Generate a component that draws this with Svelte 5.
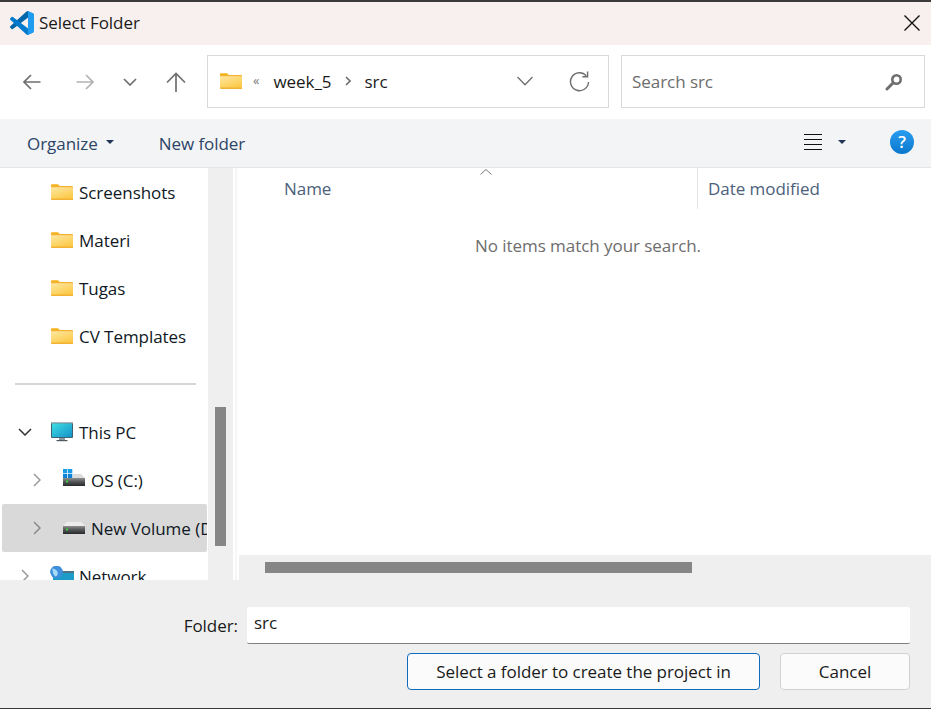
<script>
  const quick = ['Screenshots', 'Materi', 'Tugas', 'CV Templates'];
</script>

{#snippet folder()}
  <svg class="folder" viewBox="0 0 22 18" width="22" height="18">
    <path d="M0 2.2a1 1 0 0 1 1-1h6l2 2h-9z" fill="#f5b21b"/>
    <path d="M0 3h21a1 1 0 0 1 1 1v13H1a1 1 0 0 1-1-1z" fill="#f2b233"/>
    <path d="M0 4.2h21a1 1 0 0 1 1 1V15.6H0z" fill="url(#fg)"/>
  </svg>
{/snippet}

{#snippet drive(win)}
  <svg class="drive" viewBox="0 0 22 20" width="22" height="20">
    {#if win}
      <rect x="0" y="1" width="4.3" height="4.3" fill="#1a9be6"/>
      <rect x="5" y="1" width="4.3" height="4.3" fill="#1a9be6"/>
      <rect x="0" y="6" width="4.3" height="4.3" fill="#0f84d6"/>
      <rect x="5" y="6" width="4.3" height="4.3" fill="#0f84d6"/>
      <path d="M10 6h8l4 4H10z" fill="#dcdcdc"/>
    {:else}
      <path d="M4 6h14l4 4H0z" fill="#ececec"/>
    {/if}
    <rect x="0" y="10" width="22" height="8" fill="url(#hdd)"/>
    <rect x="3" y="12.5" width="2" height="2" fill="#37d437"/>
  </svg>
{/snippet}

<svg class="defs" width="0" height="0" aria-hidden="true">
  <defs>
    <linearGradient id="fg" x1="0" y1="0" x2="0.6" y2="1">
      <stop offset="0" stop-color="#ffe7a3"/>
      <stop offset="1" stop-color="#fbcb4c"/>
    </linearGradient>
    <linearGradient id="mon" x1="0" y1="0" x2="1" y2="1">
      <stop offset="0" stop-color="#3fdde2"/>
      <stop offset="1" stop-color="#1492c9"/>
    </linearGradient>
    <linearGradient id="hdd" x1="0" y1="0" x2="0" y2="1">
      <stop offset="0" stop-color="#8f8f8f"/>
      <stop offset="0.45" stop-color="#55585a"/>
      <stop offset="1" stop-color="#26282a"/>
    </linearGradient>
    <linearGradient id="help" x1="0" y1="0" x2="0" y2="1">
      <stop offset="0" stop-color="#2a9df0"/>
      <stop offset="1" stop-color="#0a78cc"/>
    </linearGradient>
  </defs>
</svg>

<div class="dialog">
  <header class="titlebar">
    <svg class="logo" viewBox="0 0 100 100" width="24" height="24">
      <path d="M96.46 10.8 75.86.87a6.23 6.23 0 0 0-7.1 1.2L1.33 63.6a4.17 4.17 0 0 0 0 6.16l5.5 5a4.17 4.17 0 0 0 5.32.24L93.42 13.3A4.14 4.14 0 0 1 100 16.6v-.24a6.25 6.25 0 0 0-3.54-5.55z" fill="#0065a9"/>
      <path d="M96.46 89.2 75.86 99.13a6.23 6.23 0 0 1-7.1-1.2L1.33 36.4a4.17 4.17 0 0 1 0-6.16l5.5-5a4.17 4.17 0 0 1 5.32-.24l81.27 61.7A4.14 4.14 0 0 0 100 83.4v.24a6.25 6.25 0 0 1-3.54 5.55z" fill="#007acc"/>
      <path d="M75.86 99.13a6.23 6.23 0 0 1-7.1-1.2c2.3 2.3 6.24.67 6.24-2.58V4.65c0-3.25-3.94-4.88-6.24-2.58a6.23 6.23 0 0 1 7.1-1.2l20.6 9.9A6.25 6.25 0 0 1 100 16.4v67.2a6.25 6.25 0 0 1-3.54 5.63z" fill="#1f9cf0"/>
    </svg>
    <span class="title">Select Folder</span>
    <svg class="close" viewBox="0 0 16 16" width="16" height="16">
      <path d="M.5.5l15 15M15.5.5l-15 15" stroke="#111" stroke-width="1.4" fill="none"/>
    </svg>
  </header>

  <div class="toolbar">
    <div class="nav">
      <svg viewBox="0 0 18 16" width="18" height="16"><path d="M17.5 8H1M8 1 1 8l7 7" stroke="#6f6f6f" stroke-width="1.7" fill="none"/></svg>
      <svg viewBox="0 0 18 16" width="18" height="16"><path d="M.5 8H17M10 1l7 7-7 7" stroke="#b2b2b2" stroke-width="1.7" fill="none"/></svg>
      <svg viewBox="0 0 14 8" width="14" height="8"><path d="M1 1l6 6 6-6" stroke="#6f6f6f" stroke-width="1.7" fill="none"/></svg>
      <svg viewBox="0 0 20 20" width="20" height="20"><path d="M10 20V1.5M1 10.5l9-9 9 9" stroke="#6f6f6f" stroke-width="1.7" fill="none"/></svg>
    </div>
    <div class="address">
      {@render folder()}
      <span class="rewind">«</span>
      <span class="crumb">week_5</span>
      <svg class="sep" viewBox="0 0 6 10" width="6" height="10"><path d="M1 1l4 4-4 4" stroke="#6f6f6f" stroke-width="1.6" fill="none"/></svg>
      <span class="crumb">src</span>
      <svg class="addr-drop" viewBox="0 0 16 10" width="16" height="10"><path d="M.5 1 8 8.800 15.500 1" stroke="#6f6f6f" stroke-width="1.3" fill="none"/></svg>
      <svg class="refresh" viewBox="0 0 21 21" width="21" height="21">
        <path d="M17.3 4.8A9 9 0 1 0 19.5 11" stroke="#6f6f6f" stroke-width="1.4" fill="none"/>
        <path d="M18.6.6v5.2h-5.2" stroke="#6f6f6f" stroke-width="1.4" fill="none"/>
      </svg>
    </div>
    <div class="search">
      <span>Search src</span>
      <svg class="mag" viewBox="0 0 18 18" width="18" height="18">
        <circle cx="11.5" cy="6.5" r="4.2" stroke="#6f6f6f" stroke-width="2.6" fill="none"/>
        <path d="M8 10 2 16" stroke="#6f6f6f" stroke-width="3" stroke-linecap="round"/>
      </svg>
    </div>
  </div>

  <div class="commands">
    <span class="cmd">Organize</span>
    <span class="caret org"></span>
    <span class="cmd newf">New folder</span>
    <svg class="viewicon" viewBox="0 0 18 16" width="18" height="16">
      <path d="M0 .5h18M0 5.500h18M0 10.500h18M0 15.500h18" stroke="#111" stroke-width="1" fill="none"/>
    </svg>
    <span class="caret view"></span>
    <svg class="helpicon" viewBox="0 0 24 24" width="24" height="24">
      <circle cx="12" cy="12" r="12" fill="url(#help)"/>
      <text x="12" y="18" text-anchor="middle" class="q">?</text>
    </svg>
  </div>

  <div class="body">
    <aside class="side">
      <div class="tree">
        {#each quick as q}
          <div class="row lvl1">{@render folder()}<span>{q}</span></div>
        {/each}
        <div class="divider"></div>
        <div class="row lvl0">
          <svg class="chev" viewBox="0 0 14 8" width="14" height="8"><path d="M1 1l6 6 6-6" stroke="#333" stroke-width="1.500" fill="none"/></svg>
          <svg class="pc" viewBox="0 0 22 20" width="22" height="20">
            <rect x="0" y="0" width="22" height="16" rx="1" fill="#3f6173"/>
            <rect x="0" y="0" width="22" height="1.500" fill="#a9b4ba"/>
            <rect x="1" y="1.500" width="20" height="13.500" fill="url(#mon)"/>
            <rect x="8" y="16" width="6" height="2" fill="#8b989f"/>
            <rect x="5.500" y="18" width="11" height="1.200" fill="#4f5a61"/>
          </svg>
          <span>This PC</span>
        </div>
        <div class="row lvl2">
          <svg class="chev" viewBox="0 0 8 14" width="8" height="14"><path d="M1 1l6 6-6 6" stroke="#9a9a9a" stroke-width="1.500" fill="none"/></svg>
          {@render drive(true)}
          <span>OS (C:)</span>
        </div>
        <div class="row lvl2 selected">
          <svg class="chev" viewBox="0 0 8 14" width="8" height="14"><path d="M1 1l6 6-6 6" stroke="#8a8a8a" stroke-width="1.500" fill="none"/></svg>
          {@render drive(false)}
          <span>New Volume (D:)</span>
        </div>
        <div class="row lvl0 net">
          <svg class="chev" viewBox="0 0 8 14" width="8" height="14"><path d="M1 1l6 6-6 6" stroke="#9a9a9a" stroke-width="1.500" fill="none"/></svg>
          <svg class="pc" viewBox="0 0 24 20" width="24" height="20">
            <rect x="3" y="5" width="21" height="15" rx="1" fill="#1d9bc9"/>
            <rect x="3" y="5" width="21" height="2" fill="#4f7486"/>
            <circle cx="6.500" cy="6" r="6.300" fill="#3f8fdc"/>
            <path d="M2.500 2.500q4 .5 5 3.500t-2 4.500q-3-2-3-8z" fill="#a6dcf7"/>
          </svg>
          <span>Network</span>
        </div>
      </div>
    </aside>

    <div class="vscroll"><div class="vthumb"></div></div>
    <div class="gutter"></div>

    <section class="list">
      <div class="listpane">
        <div class="cols">
          <span class="col name">Name</span>
          <svg class="sort" viewBox="0 0 12 6" width="12" height="6"><path d="M.5 5.500 6 .5l5.500 5" stroke="#777" stroke-width="1" fill="none"/></svg>
          <span class="col date">Date modified</span>
        </div>
        <p class="empty">No items match your search.</p>
      </div>
      <div class="hscroll"><div class="hthumb"></div></div>
    </section>
  </div>

  <footer class="footer">
    <div class="folder-row">
      <label for="fname">Folder:</label>
      <input id="fname" value="src" />
    </div>
    <div class="buttons">
      <button class="primary">Select a folder to create the project in</button>
      <button>Cancel</button>
    </div>
  </footer>
</div>

<style>
  :global(body) {
    margin: 0;
    background: #efefef;
  }
  .defs {
    position: absolute;
  }
  .dialog {
    width: 931px;
    height: 709px;
    box-sizing: border-box;
    display: flex;
    flex-direction: column;
    overflow: hidden;
    border-top: 2px solid #3a3a3a;
    border-bottom: 1px solid #3a3a3a;
    font-family: "Open Sans", "Noto Sans", sans-serif;
    font-size: 17px;
    letter-spacing: -0.05px;
    color: #111;
    background: #efefef;
  }
  svg {
    flex: none;
    display: block;
  }
  .titlebar {
    height: 43px;
    flex: none;
    box-sizing: border-box;
    display: flex;
    align-items: center;
    padding: 0 11px 2px 10px;
    background: #f8f0ee;
  }
  .title {
    margin-left: 5px;
    font-size: 17px;
    color: #1a1a1a;
  }
  .close {
    margin-left: auto;
  }
  .toolbar {
    height: 74px;
    flex: none;
    display: flex;
    align-items: center;
    background: #fff;
    padding: 0 6px 2px 5px;
    box-sizing: border-box;
  }
  .nav {
    width: 202px;
    flex: none;
    padding-top: 2px;
    display: grid;
    grid-template-columns: 53px 53px 37px 55px;
    justify-items: center;
    align-items: center;
  }
  .address,
  .search {
    height: 53px;
    box-sizing: border-box;
    border: 1px solid #d9d9d9;
    display: flex;
    align-items: center;
  }
  .address {
    width: 402px;
    flex: none;
    padding: 0 18px 0 12px;
    color: #1a1a1a;
  }
  .rewind {
    margin: -3px 0 0 11px;
    font-size: 13px;
    color: #777;
  }
  .crumb {
    margin-left: 14px;
  }
  .crumb + .sep {
    margin-left: 14px;
  }
  .sep + .crumb {
    margin-left: 13px;
  }
  .addr-drop {
    margin-left: auto;
  }
  .refresh {
    margin-left: 36px;
    margin-top: 1px;
  }
  .search {
    width: 304px;
    margin-left: 12px;
    justify-content: space-between;
    padding: 0 21px 0 10px;
    color: #6d6d6d;
  }
  .mag {
    margin-top: 2px;
  }
  .commands {
    height: 49px;
    flex: none;
    display: flex;
    align-items: center;
    box-sizing: border-box;
    padding: 0 17px 0 27px;
    background: #f3f4f6;
    border-bottom: 1px solid #e4e4e4;
  }
  .cmd {
    color: #2c4566;
  }
  .caret {
    width: 0;
    height: 0;
    margin-top: -2px;
    border-left: 4px solid transparent;
    border-right: 4px solid transparent;
    border-top: 4px solid #1f3556;
  }
  .org {
    margin-left: 8px;
  }
  .newf {
    margin-left: 45px;
  }
  .viewicon {
    margin-left: auto;
    margin-top: -2px;
  }
  .view {
    margin-left: 16px;
  }
  .helpicon {
    margin-left: 44px;
    margin-top: -2px;
  }
  .q {
    font-family: "Open Sans", sans-serif;
    font-size: 17px;
    font-weight: 600;
    fill: #fff;
  }
  .body {
    flex: 1;
    min-height: 0;
    display: flex;
    background: #fff;
  }
  .side {
    width: 208px;
    flex: none;
    overflow: hidden;
    background: #fff;
  }
  .tree {
    width: 208px;
  }
  .row {
    height: 48px;
    display: flex;
    align-items: center;
    color: #0f1824;
    white-space: nowrap;
    overflow: hidden;
  }
  .row .folder,
  .row .pc {
    margin-right: 6px;
  }
  .lvl1 {
    padding-left: 51px;
  }
  .lvl0 {
    padding-left: 18px;
  }
  .lvl0 .pc {
    margin-left: 19px;
  }
  .net {
    padding-left: 21px;
  }
  .net .pc {
    margin-left: 21px;
    margin-right: 5px;
    margin-top: -1px;
  }
  .lvl2 {
    padding-left: 31px;
    margin-left: 2px;
    border-radius: 2px;
    margin-right: 1px;
  }
  .lvl2 .drive {
    margin-left: 22px;
    margin-right: 6px;
    margin-top: -4px;
  }
  .selected {
    background: #d9d9d9;
  }
  .divider {
    height: 2px;
    margin: 23px 12px 23px 15px;
    background: #d6d6d6;
  }
  .vscroll {
    flex: none;
    padding-top: 239px;
    box-sizing: border-box;
    background: #efefef;
    width: 25px;
  }
  .vthumb {
    width: 11px;
    height: 139px;
    margin-left: 7px;
    background: #868686;
  }
  .gutter {
    flex: none;
    width: 2px;
    margin: 0 2px;
    background: #f6f6f6;
  }
  .list {
    flex: 1;
    min-width: 0;
    display: flex;
    flex-direction: column;
    background: #fff;
  }
  .listpane {
    flex: 1;
    min-height: 0;
  }
  .cols {
    height: 41px;
    display: flex;
    align-items: center;
    position: relative;
    color: #4c607a;
  }
  .col.name {
    width: 458px;
    padding-left: 45px;
    box-sizing: border-box;
    height: 100%;
    line-height: 42px;
  }
  .col.date {
    height: 100%;
    line-height: 42px;
    border-left: 1px solid #e4e4e4;
    padding-left: 10px;
  }
  .sort {
    position: absolute;
    left: 241px;
    top: 1px;
  }
  .empty {
    margin: 25px 0 0;
    padding-left: 6px;
    text-align: center;
    color: #6d6d6d;
  }
  .hscroll {
    height: 25px;
    flex: none;
    padding: 7px 0 0 26px;
    box-sizing: border-box;
    background: #efefef;
  }
  .hthumb {
    width: 427px;
    height: 11px;
    background: #868686;
  }
  .footer {
    height: 128px;
    flex: none;
    box-sizing: border-box;
    padding: 27px 21px 0 0;
    background: #efefef;
  }
  .folder-row {
    display: flex;
    justify-content: flex-end;
    align-items: center;
    gap: 9px;
  }
  label {
    color: #1a1a1a;
  }
  input {
    width: 663px;
    height: 37px;
    box-sizing: border-box;
    border: 0;
    border-bottom: 1px solid #808080;
    border-radius: 2px;
    padding: 0 7px 6px;
    background: #fff;
    font: inherit;
    letter-spacing: inherit;
    color: #1a1a1a;
  }
  .buttons {
    display: flex;
    justify-content: flex-end;
    gap: 20px;
    margin-top: 9px;
  }
  button {
    height: 37px;
    width: 130px;
    box-sizing: border-box;
    border: 1px solid #d2d2d2;
    border-radius: 4px;
    background: #fbfbfb;
    font: inherit;
    letter-spacing: inherit;
    color: #1a1a1a;
    padding: 0;
  }
  .primary {
    width: 353px;
    border-color: #0f6cbd;
  }
</style>
